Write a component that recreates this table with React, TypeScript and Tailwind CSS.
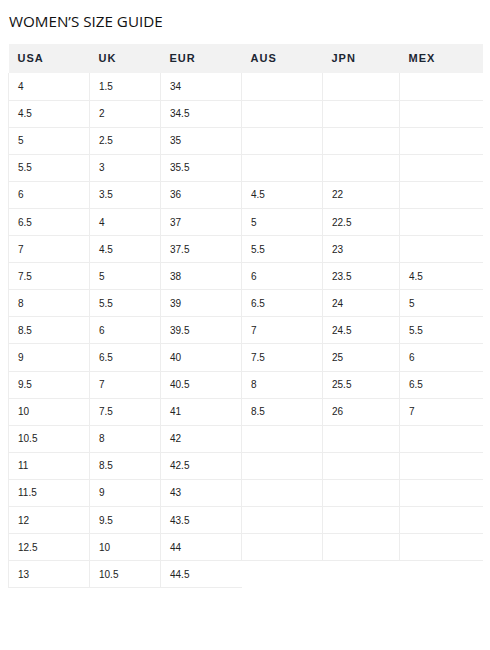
const HEAD = ["USA", "UK", "EUR", "AUS", "JPN", "MEX"];
const WIDTHS = ["w-[81px]", "w-[71px]", "w-[81px]", "w-[81px]", "w-[77px]", "w-[83px]"];

const ROWS: string[][] = [
  ["4", "1.5", "34", "", "", ""],
  ["4.5", "2", "34.5", "", "", ""],
  ["5", "2.5", "35", "", "", ""],
  ["5.5", "3", "35.5", "", "", ""],
  ["6", "3.5", "36", "4.5", "22", ""],
  ["6.5", "4", "37", "5", "22.5", ""],
  ["7", "4.5", "37.5", "5.5", "23", ""],
  ["7.5", "5", "38", "6", "23.5", "4.5"],
  ["8", "5.5", "39", "6.5", "24", "5"],
  ["8.5", "6", "39.5", "7", "24.5", "5.5"],
  ["9", "6.5", "40", "7.5", "25", "6"],
  ["9.5", "7", "40.5", "8", "25.5", "6.5"],
  ["10", "7.5", "41", "8.5", "26", "7"],
  ["10.5", "8", "42", "", "", ""],
  ["11", "8.5", "42.5", "", "", ""],
  ["11.5", "9", "43", "", "", ""],
  ["12", "9.5", "43.5", "", "", ""],
  ["12.5", "10", "44", "", "", ""],
  ["13", "10.5", "44.5"],
];

export default function App() {
  return (
    <div className="min-h-[650px] w-[490px] bg-white px-2 pt-[10px] font-['Liberation_Sans',Arial,sans-serif]">
      <h1 className="h-[34px] pl-[1px] font-['Open_Sans',sans-serif] text-[15.2px] leading-[22px] text-[#111]">WOMEN’S SIZE GUIDE</h1>
      <table className="w-[474px] table-fixed border-collapse">
        <thead>
          <tr className="h-[29px] bg-[#f2f2f2]">
            {HEAD.map((h, i) => (
              <th key={h} className={`${WIDTHS[i]} px-[9px] text-left text-[11px] font-bold tracking-[1px] text-[#1c2632]`}>{h}</th>
            ))}
          </tr>
        </thead>
        <tbody>
          {ROWS.map((r, ri) => (
            <tr key={ri} className="h-[27.1px]">
              {r.map((c, ci) => (
                <td key={ci} className="border-b border-l border-[#ededed] px-[9px] text-[10px] text-[#222]">{c}</td>
              ))}
            </tr>
          ))}
        </tbody>
      </table>
    </div>
  );
}
